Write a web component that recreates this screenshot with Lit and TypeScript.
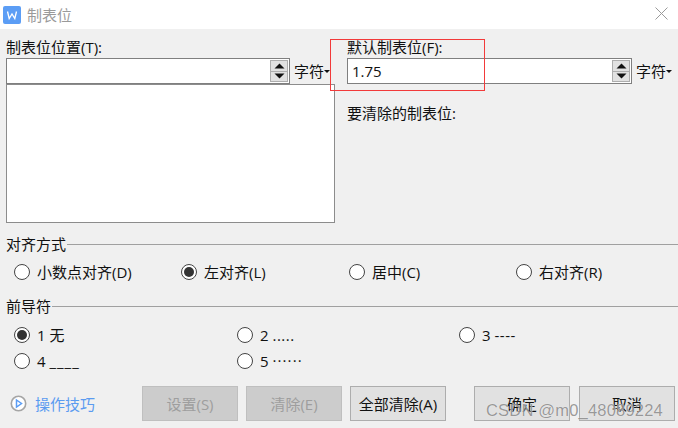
import { LitElement, html, css, svg } from "lit";
import { customElement } from "lit/decorators.js";

const spin = html`<div class="spin">
  <div class="sb"><svg width="11" height="6" viewBox="0 0 11 6"><path d="M5.5 0.5 L10.5 5.5 L0.5 5.5 Z" fill="#111"/></svg></div>
  <div class="sb"><svg width="11" height="6" viewBox="0 0 11 6"><path d="M0.5 0.5 L10.5 0.5 L5.5 5.5 Z" fill="#111"/></svg></div>
</div>`;

const unit = html`<div class="unit"><span>字符</span><i class="caret"></i></div>`;

const radio = (label: string, on = false, leader = "", cls = "") => html`<div class="radio">
  <span class="dot ${on ? "on" : ""}"></span><span class="rl">${label} <span class="${cls}">${leader}</span></span>
</div>`;

@customElement("app-root")
export class AppRoot extends LitElement {
  static styles = css`
    :host {
      display: block;
      width: 678px;
      height: 428px;
      position: relative;
      overflow: hidden;
      background: #f0f0f0;
      color: #111;
      font: 15px/20px "Open Sans", "Noto Sans CJK SC", sans-serif;
    }
    .title {
      height: 29px;
      background: #fff;
      display: flex;
      align-items: center;
      padding: 0 10px 0 3px;
      color: #9a9a9a;
    }
    .logo { width: 18px; height: 18px; margin-right: 6px; }
    .title .t { flex: 1; }
    .close { margin-top: -3px; }
    .top {
      display: grid;
      grid-template-columns: 341px 331px;
      padding: 8px 0 0 6px;
      height: 186px;
    }
    .lab { height: 21px; line-height: 20px; }
    .row { display: flex; align-items: center; }
    .input {
      height: 26px;
      box-sizing: border-box;
      background: #fff;
      border: 1px solid #7f7f7f;
      display: flex;
      align-items: center;
      justify-content: space-between;
      padding: 1px 1px 1px 4px;
      font-size: 15px;
    }
    .w1 { width: 284px; }
    .w2 { width: 285px; }
    .spin {
      width: 18px;
      height: 22px;
      display: flex;
      flex-direction: column;
      border: 1px solid #adadad;
      box-sizing: border-box;
      background: #e1e1e1;
    }
    .sb {
      flex: 1;
      display: flex;
      align-items: center;
      justify-content: center;
    }
    .sb + .sb { border-top: 1px solid #adadad; }
    .unit { display: flex; align-items: center; margin-left: 4px; }
    .caret {
      width: 0; height: 0;
      border-left: 3px solid transparent;
      border-right: 3px solid transparent;
      border-top: 3px solid #111;
    }
    .list {
      width: 329px;
      height: 139px;
      box-sizing: border-box;
      background: #fff;
      border: 1px solid #8c8c8c;
    }
    .clear { margin-top: 19px; }
    .head { display: flex; align-items: center; height: 20px; padding-left: 6px; margin-top: 11px; }
    .head .line { flex: 1; height: 1px; background: #a0a0a0; margin-left: 1px; }
    .g4 {
      display: grid;
      grid-template-columns: 167px 168px 167px 167px;
      padding: 8px 0 0 14px;
      height: 20px;
    }
    .second { margin-top: 14px; }
    .g3 {
      display: grid;
      grid-template-columns: 223px 222px 200px;
      grid-auto-rows: 26px;
      padding: 9px 0 0 14px;
    }
    .radio { display: flex; align-items: center; height: 20px; }
    .dot {
      width: 16px; height: 16px;
      box-sizing: border-box;
      border: 1px solid #444;
      border-radius: 50%;
      background: #fff;
      display: flex; align-items: center; justify-content: center;
      margin-right: 7px;
    }
    .dot.on::after {
      content: "";
      width: 10px; height: 10px;
      border-radius: 50%;
      background: #333;
    }
    .ls1 { letter-spacing: 0.5px; }
    .ls2 { letter-spacing: 1px; }
    .ls3 { letter-spacing: 1.1px; position: relative; top: -1px; }
    .bar {
      display: flex;
      align-items: center;
      padding: 0 3px 0 10px;
      margin-top: 9px;
      height: 35px;
    }
    .tips {
      width: 132px;
      display: flex;
      align-items: center;
      color: #5b9bf0;
    }
    .tips svg { margin-right: 8px; }
    .btn {
      width: 96px;
      height: 35px;
      box-sizing: border-box;
      border: 1px solid #adadad;
      background: #e1e1e1;
      display: flex;
      align-items: center;
      justify-content: center;
      margin-right: 8px;
    }
    .btn.dis { background: #cccccc; border-color: #bfbfbf; color: #9e9e9e; }
    .gap { margin-right: 28px; }
    .last { margin: 0 0 0 1px; }
    .mark {
      position: absolute;
      left: 486px;
      top: 398px;
      font: 16.5px/24px "Liberation Sans", sans-serif;
      letter-spacing: 0.2px;
      color: rgba(120, 120, 120, 0.75);
      text-shadow: 0 0 1px rgba(255,255,255,0.9);
      white-space: nowrap;
    }
    .redbox {
      position: absolute;
      left: 330px;
      top: 39px;
      width: 155px;
      height: 52px;
      box-sizing: border-box;
      border: 1px solid #f23a3a;
    }
  `;

  render() {
    return html`
      <div class="title">
        <svg class="logo" viewBox="0 0 18 18">
          <rect width="18" height="18" rx="2" fill="#5b9df5"/>
          ${svg`<path d="M4.5 5.5 L6.2 12.5 L9 8 L11.8 12.5 L13.5 5.5" fill="none" stroke="#fff" stroke-width="1.3"/>`}
        </svg>
        <span class="t">制表位</span>
        <svg class="close" width="13" height="13" viewBox="0 0 13 13"><path d="M0.5 0.5 L12.5 12.5 M12.5 0.5 L0.5 12.5" stroke="#9a9a9a" stroke-width="1"/></svg>
      </div>
      <div class="top">
        <div>
          <div class="lab">制表位位置(T):</div>
          <div class="row"><div class="input w1"><span></span>${spin}</div>${unit}</div>
          <div class="list"></div>
        </div>
        <div>
          <div class="lab">默认制表位(F):</div>
          <div class="row"><div class="input w2"><span>1.75</span>${spin}</div>${unit}</div>
          <div class="lab clear">要清除的制表位:</div>
        </div>
      </div>
      <div class="head"><span>对齐方式</span><span class="line"></span></div>
      <div class="g4">
        ${radio("小数点对齐(D)")}${radio("左对齐(L)", true)}${radio("居中(C)")}${radio("右对齐(R)")}
      </div>
      <div class="head second"><span>前导符</span><span class="line"></span></div>
      <div class="g3">
        ${radio("1 无", true)}${radio("2", false, ".....", "ls1")}${radio("3", false, "----", "ls1")}
        ${radio("4", false, "____", "ls2")}${radio("5", false, "······", "ls3")}
      </div>
      <div class="bar">
        <div class="tips">
          <svg width="17" height="17" viewBox="0 0 17 17">
            <circle cx="8.5" cy="8.5" r="7.2" fill="#fff" stroke="#a5a5a5" stroke-width="1.6"/>
            <path d="M6.5 5 L11.5 8.5 L6.5 12 Z" fill="none" stroke="#5b9df5" stroke-width="1.5"/>
          </svg>
          <span>操作技巧</span>
        </div>
        <div class="btn dis">设置(S)</div>
        <div class="btn dis">清除(E)</div>
        <div class="btn gap">全部清除(A)</div>
        <div class="btn">确定</div>
        <div class="btn last">取消</div>
      </div>
      <div class="redbox"></div>
      <div class="mark">CSDN @m0_48089224</div>
    `;
  }
}
